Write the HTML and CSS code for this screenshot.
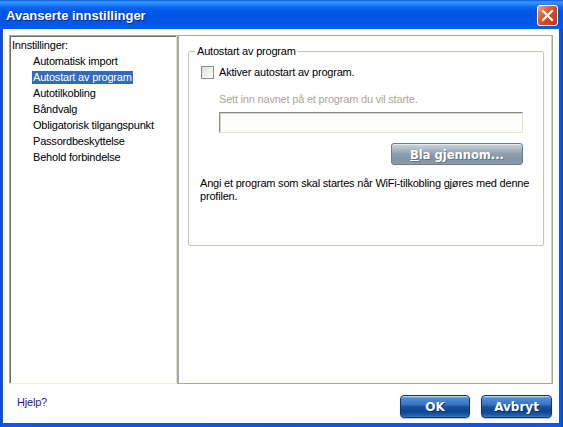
FILE: index.html
```html
<!DOCTYPE html>
<html lang="no">
<head>
<meta charset="utf-8">
<title>Avanserte innstillinger</title>
<link rel="stylesheet" href="styles.css">
</head>
<body>
<div class="window">
  <div class="titlebar">
    <span class="title">Avanserte innstillinger</span>
    <span class="close" aria-label="Lukk">
      <svg width="19" height="19" viewBox="0 0 19 19"><path d="M5 5 L14 14 M14 5 L5 14" stroke="#fff" stroke-width="2.2" stroke-linecap="square"/></svg>
    </span>
  </div>
  <div class="client">
    <div class="panes">
      <div class="list">
        <div class="list-head">Innstillinger:</div>
        <div class="item"><span>Automatisk import</span></div>
        <div class="item selected"><span>Autostart av program</span></div>
        <div class="item"><span>Autotilkobling</span></div>
        <div class="item"><span>Båndvalg</span></div>
        <div class="item"><span>Obligatorisk tilgangspunkt</span></div>
        <div class="item"><span>Passordbeskyttelse</span></div>
        <div class="item"><span>Behold forbindelse</span></div>
      </div>
      <div class="page">
        <fieldset class="group">
          <legend>Autostart av program</legend>
          <div class="group-body">
            <label class="check"><span class="box"></span>Aktiver autostart av program.</label>
            <div class="indent">
              <div class="hint">Sett inn navnet på et program du vil starte.</div>
              <div class="input"></div>
              <div class="browse-row"><span class="btn-gray"><u>B</u>la gjennom...</span></div>
            </div>
            <p class="desc">Angi et program som skal startes når WiFi-tilkobling gjøres med denne<br>profilen.</p>
          </div>
        </fieldset>
      </div>
    </div>
    <div class="footer">
      <a class="help" href="#">Hjelp?</a>
      <div class="buttons">
        <span class="btn-blue ok">OK</span>
        <span class="btn-blue cancel">Avbryt</span>
      </div>
    </div>
  </div>
</div>
</body>
</html>
```
FILE: styles.css
```css
* { box-sizing: border-box; }
html, body { margin: 0; padding: 0; }
body {
  width: 563px;
  height: 427px;
  overflow: hidden;
  background: #fff;
  font-family: "Liberation Sans", Arial, sans-serif;
  font-size: 11px;
  letter-spacing: -0.2px;
  color: #000;
}
.window {
  width: 563px;
  height: 427px;
  display: flex;
  flex-direction: column;
  background: linear-gradient(to right, #0a4ad6 0, #0d56e6 2px, #0c55e4 50%, #0d56e6 calc(100% - 2px), #0a3fc4 100%);
}
.titlebar {
  height: 29px;
  flex: none;
  display: flex;
  align-items: center;
  justify-content: space-between;
  padding: 0 5px 0 6px;
  background: linear-gradient(to bottom, #0a5be0 0, #3d95ff 2px, #2a87fb 4px, #0a69f3 7px, #0058e9 11px, #0055e3 16px, #0056e8 24px, #0059ed 29px);
}
.title {
  color: #fff;
  font-family: "Liberation Sans", Arial, sans-serif;
  font-weight: bold;
  font-size: 13px;
  letter-spacing: 0;
  text-shadow: 1px 1px 0 #0b2a9a;
  padding-top: 1px;
}
.close {
  width: 21px;
  height: 21px;
  margin-top: 2px;
  border: 1px solid #fff;
  border-radius: 3px;
  background: linear-gradient(135deg, #f1a58a 0%, #e2683f 30%, #d5461d 60%, #c23a17 100%);
  display: flex;
  align-items: center;
  justify-content: center;
}
.client {
  flex: 1;
  margin: 0 4px 4px 3px;
  background: #fff;
  display: flex;
  flex-direction: column;
}
.panes {
  height: 355px;
  padding: 6px 6px 0 6px;
  display: flex;
}
.list {
  width: 168px;
  flex: none;
  border-top: 1px solid #aca899;
  border-left: 1px solid #aca899;
  border-right: 1px solid #e4e2d6;
  border-bottom: 1px solid #f1efe2;
  box-shadow: inset 1px 1px 0 #716f64;
  padding: 1px 0 0 2px;
  line-height: 16px;
}
.list-head { height: 16px; }
.item { height: 16px; padding-left: 20px; display: flex; align-items: center; }
.item span { line-height: 13px; padding: 0 1px; }
.item.selected span { background: #316ac5; color: #fff; }
.page {
  flex: 1;
  border: 1px solid #aca899;
  box-shadow: inset -1px 0 0 #d4d1c4, inset 1px 0 0 #aca899;
  padding: 9px 8px 0 10px;
}
.group {
  margin: 0;
  padding: 0;
  height: 201px;
  border: 1px solid #c6c3b6;
  border-radius: 2px;
}
.group legend {
  margin-left: 6px;
  padding: 0 2px;
  line-height: 13px;
}
.group-body { padding: 8px 2px 0 12px; }
.check {
  display: flex;
  align-items: center;
  gap: 5px;
  height: 13px;
  line-height: 13px;
}
.box {
  width: 13px;
  height: 13px;
  border: 1px solid #8e8f8f;
  background: linear-gradient(135deg, #dcdcd7 0%, #f2f2ef 60%, #fff 100%);
}
.indent { margin-left: 18px; width: 304px; }
.hint { color: #aca899; margin-top: 14px; line-height: 13px; }
.input {
  margin-top: 6px;
  height: 21px;
  border-top: 1px solid #8b8a84;
  border-left: 1px solid #8b8a84;
  border-right: 1px solid #e6e4da;
  border-bottom: 1px solid #e6e4da;
  box-shadow: inset 1px 1px 0 #d8d6cc;
  background: #fdfdfa;
}
.browse-row { margin-top: 10px; display: flex; justify-content: flex-end; }
.btn-gray {
  width: 132px;
  height: 22px;
  display: flex;
  align-items: center;
  justify-content: center;
  border: 1px solid #6e7d8b;
  border-radius: 3px;
  background: linear-gradient(to bottom, #cbd5de 0%, #aab7c2 30%, #8d9dab 50%, #8293a2 75%, #8c9cab 100%);
  box-shadow: inset 0 1px 0 rgba(255,255,255,.5);
  color: #fff;
  font-family: "DejaVu Sans", Verdana, sans-serif;
  font-weight: bold;
  font-size: 11.5px;
  letter-spacing: 0;
  text-shadow: 1px 1px 0 rgba(60,70,80,.45);
  padding-top: 1px;
}
.btn-gray u { text-decoration: underline; }
.desc { margin: 12px 0 0 -1px; line-height: 13px; }
.footer {
  flex: 1;
  display: flex;
  justify-content: space-between;
  align-items: flex-start;
  padding: 11px 7px 0 14px;
}
.help {
  color: #1a1aa6;
  text-decoration: none;
  line-height: 13px;
  margin-top: 1px;
}
.buttons { display: flex; gap: 11px; }
.btn-blue {
  height: 23px;
  display: flex;
  align-items: center;
  justify-content: center;
  border: 1px solid #10356e;
  border-radius: 4px;
  background: linear-gradient(to bottom, #8fbbee 0%, #4f8bd6 12%, #3a74c4 40%, #175099 52%, #0f4591 75%, #1f5fae 92%, #3c7cc8 100%);
  box-shadow: inset 0 1px 0 rgba(255,255,255,.45), 0 1px 1px rgba(0,0,0,.25);
  color: #fff;
  font-family: "DejaVu Sans", Verdana, sans-serif;
  font-weight: bold;
  font-size: 12px;
  letter-spacing: 0;
  text-shadow: 1px 1px 0 #0c2f66;
}
.btn-blue.ok { width: 70px; }
.btn-blue.cancel { width: 71px; }
```
